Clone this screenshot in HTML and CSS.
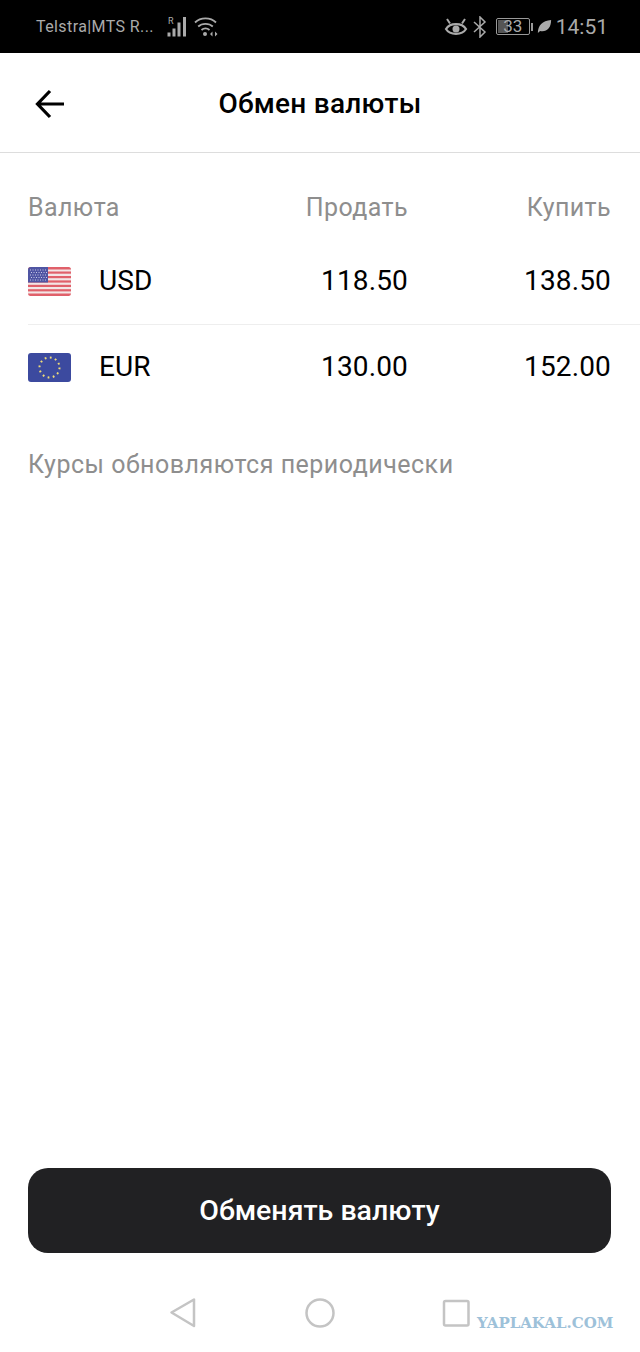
FILE: index.html
```html
<!DOCTYPE html>
<html>
<head>
  <meta charset="UTF-8" />
  <title>Обмен валюты</title>
  <link rel="stylesheet" href="styles.css">
</head>
<body>
  <div class="status-bar">
    <div class="status-left">
      <span class="carrier">Telstra|MTS R...</span>
      <svg class="signal" width="22" height="22" viewBox="0 0 22 22">
        <text class="roaming" x="1" y="8">R</text>
        <rect x="0.500" y="16.500" width="3" height="4" fill="#aaa"/>
        <rect x="5.500" y="12.500" width="3" height="8" fill="#aaa"/>
        <rect x="10.500" y="6.500" width="3" height="14" fill="#aaa"/>
        <rect x="16" y="1" width="3" height="19.500" fill="#aaa"/>
      </svg>
      <svg class="wifi" width="24" height="22" viewBox="0 0 24 22" fill="none" stroke="#aaa" stroke-width="1.800">
        <path d="M1 6.500C6.500 1 16.500 1 22 6.500"/>
        <path d="M4.200 10.500C8 6.900 15 6.900 18.800 10.500"/>
        <path d="M7.500 14C9.800 12 13.200 12 15.500 14"/>
        <circle cx="11" cy="18" r="2" fill="#aaa" stroke="none"/>
        <path d="M16 18l2.500-2.500v5zM23.500 18l-2.500-2.500v5z" fill="#aaa" stroke="none"/>
      </svg>
    </div>
    <div class="status-right">
      <svg width="24" height="22" viewBox="0 0 24 22" fill="none" stroke="#aaa" stroke-width="2.200">
        <path d="M2 13C6 6.500 18 6.500 22 13C18 19.500 6 19.500 2 13Z"/>
        <circle cx="12" cy="13" r="3.500" fill="#aaa" stroke="none"/>
        <path d="M3 3L6 7.500M21 3L18 7.500" stroke-width="2"/>
      </svg>
      <svg width="16" height="22" viewBox="0 0 16 22" fill="none" stroke="#aaa" stroke-width="1.500">
        <path d="M2 6L13 16L8 21V1L13 6L2 16"/>
      </svg>
      <div class="battery">
        <div class="battery-body"><span class="battery-fill"></span><span class="battery-num">33</span></div>
        <span class="battery-tip"></span>
      </div>
      <svg width="15" height="15" viewBox="0 0 17 17">
        <path d="M1 16C1 7 6 2 16 1C16 10 11 15 3.500 13.500Z" fill="#aaa"/>
      </svg>
      <span class="time">14:51</span>
    </div>
  </div>

  <div class="header">
    <svg class="back" width="30" height="30" viewBox="0 0 30 30" fill="none" stroke="#000" stroke-width="3.200">
      <path d="M29 15H3M15 2L2.500 15L15 28"/>
    </svg>
    <div class="title">Обмен валюты</div>
  </div>

  <div class="rates">
    <div class="row head">
      <div class="cur">Валюта</div>
      <div class="sell">Продать</div>
      <div class="buy">Купить</div>
    </div>
    <div class="row rate divided">
      <div class="cur">
        <svg class="flag" width="43" height="29" viewBox="0 0 43 29">
          <rect width="43" height="29" rx="3" fill="#f3e6e6"/>
          <path d="M0 2.500a2.500 2.500 0 0 1 2.500-2.500h38a2.500 2.500 0 0 1 2.500 2.500z" fill="#e0606a"/>
          <rect y="4.500" width="43" height="2.200" fill="#e0606a"/>
          <rect y="9" width="43" height="2.200" fill="#e0606a"/>
          <rect y="13.400" width="43" height="2.200" fill="#e0606a"/>
          <rect y="17.800" width="43" height="2.200" fill="#e0606a"/>
          <rect y="22.200" width="43" height="2.200" fill="#e0606a"/>
          <path d="M0 26.600h43a2.400 2.400 0 0 1-2.500 2.400h-38a2.400 2.400 0 0 1-2.500-2.400z" fill="#e0606a"/>
          <path d="M0 3a3 3 0 0 1 3-3h17v15.500H0z" fill="#4f55a3"/>
          <path d="M2 3h17M3 5.500h16M2 8h17M3 10.500h16M2 13h17" stroke="#c9cbe6" stroke-width="1" stroke-dasharray="1 1.500"/>
        </svg>
        <span class="code">USD</span>
      </div>
      <div class="sell">118.50</div>
      <div class="buy">138.50</div>
    </div>
    <div class="row rate last">
      <div class="cur">
        <svg class="flag" width="43" height="29" viewBox="0 0 43 29">
          <rect width="43" height="29" rx="3" fill="#3c4a9f"/>
          <circle cx="21.500" cy="14.500" r="10" fill="none" stroke="#f0dc78" stroke-width="2" stroke-dasharray="1.800 3.440"/>
        </svg>
        <span class="code">EUR</span>
      </div>
      <div class="sell">130.00</div>
      <div class="buy">152.00</div>
    </div>
  </div>

  <div class="note">Курсы обновляются периодически</div>

  <div class="action">
    <button class="exchange-btn">Обменять валюту</button>
  </div>

  <div class="nav-bar">
    <svg width="28" height="32" viewBox="0 0 28 32" fill="none" stroke="#c4c4c4" stroke-width="2.500" stroke-linejoin="round">
      <path d="M25 2.500V29L2.500 15.500Z"/>
    </svg>
    <svg width="32" height="32" viewBox="0 0 32 32" fill="none" stroke="#c4c4c4" stroke-width="2.500">
      <circle cx="16" cy="16" r="13.500"/>
    </svg>
    <svg width="28" height="28" viewBox="0 0 28 28" fill="none" stroke="#c4c4c4" stroke-width="2.500" stroke-linejoin="round">
      <rect x="2" y="2" width="24.500" height="24.500" rx="1.500"/>
    </svg>
  </div>
  <div class="watermark">YAPLAKAL.COM</div>
</body>
</html>
```

FILE: styles.css
```css
html, body {
  margin: 0;
  padding: 0;
}

body {
  position: relative;
  display: flex;
  flex-direction: column;
  height: 1352px;
  overflow: hidden;
  background-color: #fff;
  color: #000;
  font-family: Roboto, "Liberation Sans", sans-serif;
}

/* Status bar */
.status-bar {
  display: flex;
  justify-content: space-between;
  align-items: center;
  flex: none;
  height: 53px;
  padding: 0 32px 0 36px;
  box-sizing: border-box;
  background-color: #000;
  color: #aaa;
}

.status-left, .status-right {
  display: flex;
  align-items: center;
}

.carrier {
  font-size: 16px;
  letter-spacing: 0.4px;
  margin-right: 13px;
}

.roaming {
  font-size: 9px;
  fill: #aaa;
}

.wifi {
  margin-left: 5px;
}

.status-right {
  gap: 4px;
}

.battery {
  display: flex;
  align-items: center;
  margin-left: 4px;
}

.battery-body {
  position: relative;
  width: 32px;
  height: 15px;
  border: 1px solid #999;
  border-radius: 2px;
  text-align: center;
  font-size: 17px;
  line-height: 15px;
}

.battery-fill {
  position: absolute;
  left: 1px;
  top: 1px;
  bottom: 1px;
  width: 10px;
  background-color: #555;
}

.battery-num {
  position: relative;
}

.battery-tip {
  width: 2px;
  height: 8px;
  margin-left: 1px;
  background-color: #999;
}

.time {
  font-size: 21px;
}

/* Header */
.header {
  position: relative;
  display: flex;
  align-items: center;
  justify-content: center;
  flex: none;
  height: 100px;
  padding-top: 2px;
  box-sizing: border-box;
  border-bottom: 1px solid #ddd;
}

.back {
  position: absolute;
  left: 35px;
  top: 36px;
}

.title {
  font-size: 28px;
  font-weight: 500;
  letter-spacing: 0.25px;
}

/* Rates table */
.rates {
  padding-left: 28px;
}

.row {
  display: flex;
  align-items: center;
  padding-right: 29px;
}

.cur {
  display: flex;
  align-items: center;
  width: 200px;
}

.sell {
  width: 180px;
  text-align: right;
}

.buy {
  width: 203px;
  text-align: right;
}

.head {
  height: 85px;
  padding-top: 23px;
  box-sizing: border-box;
  font-size: 25px;
  letter-spacing: 0.4px;
  color: #8e8e8e;
}

.rate {
  font-size: 28px;
  letter-spacing: 0.15px;
}

.rate .code, .rate .sell, .rate .buy {
  padding-bottom: 2px;
}

.divided {
  height: 87px;
  border-bottom: 1px solid #eee;
  box-sizing: border-box;
}

.last {
  height: 84px;
}

.flag {
  flex: none;
  margin-right: 28px;
}

.note {
  margin: 41px 0 0 28px;
  font-size: 25px;
  letter-spacing: 0.5px;
  color: #8e8e8e;
}

/* Bottom button */
.action {
  margin-top: auto;
  padding: 0 29px 0 28px;
}

.exchange-btn {
  display: block;
  width: 100%;
  height: 85px;
  border: none;
  border-radius: 20px;
  background-color: #212123;
  color: #fff;
  font-family: inherit;
  font-size: 28.5px;
  font-weight: 500;
}

/* Android nav bar */
.nav-bar {
  display: flex;
  justify-content: space-between;
  align-items: center;
  flex: none;
  width: 301px;
  height: 99px;
  margin-left: 169px;
  box-sizing: border-box;
  padding-top: 30px;
  padding-bottom: 10px;
}

.watermark {
  position: absolute;
  left: 477px;
  top: 1314px;
  font-family: "DejaVu Serif", serif;
  font-size: 15px;
  font-weight: bold;
  color: #9dc1d9;
}
```
